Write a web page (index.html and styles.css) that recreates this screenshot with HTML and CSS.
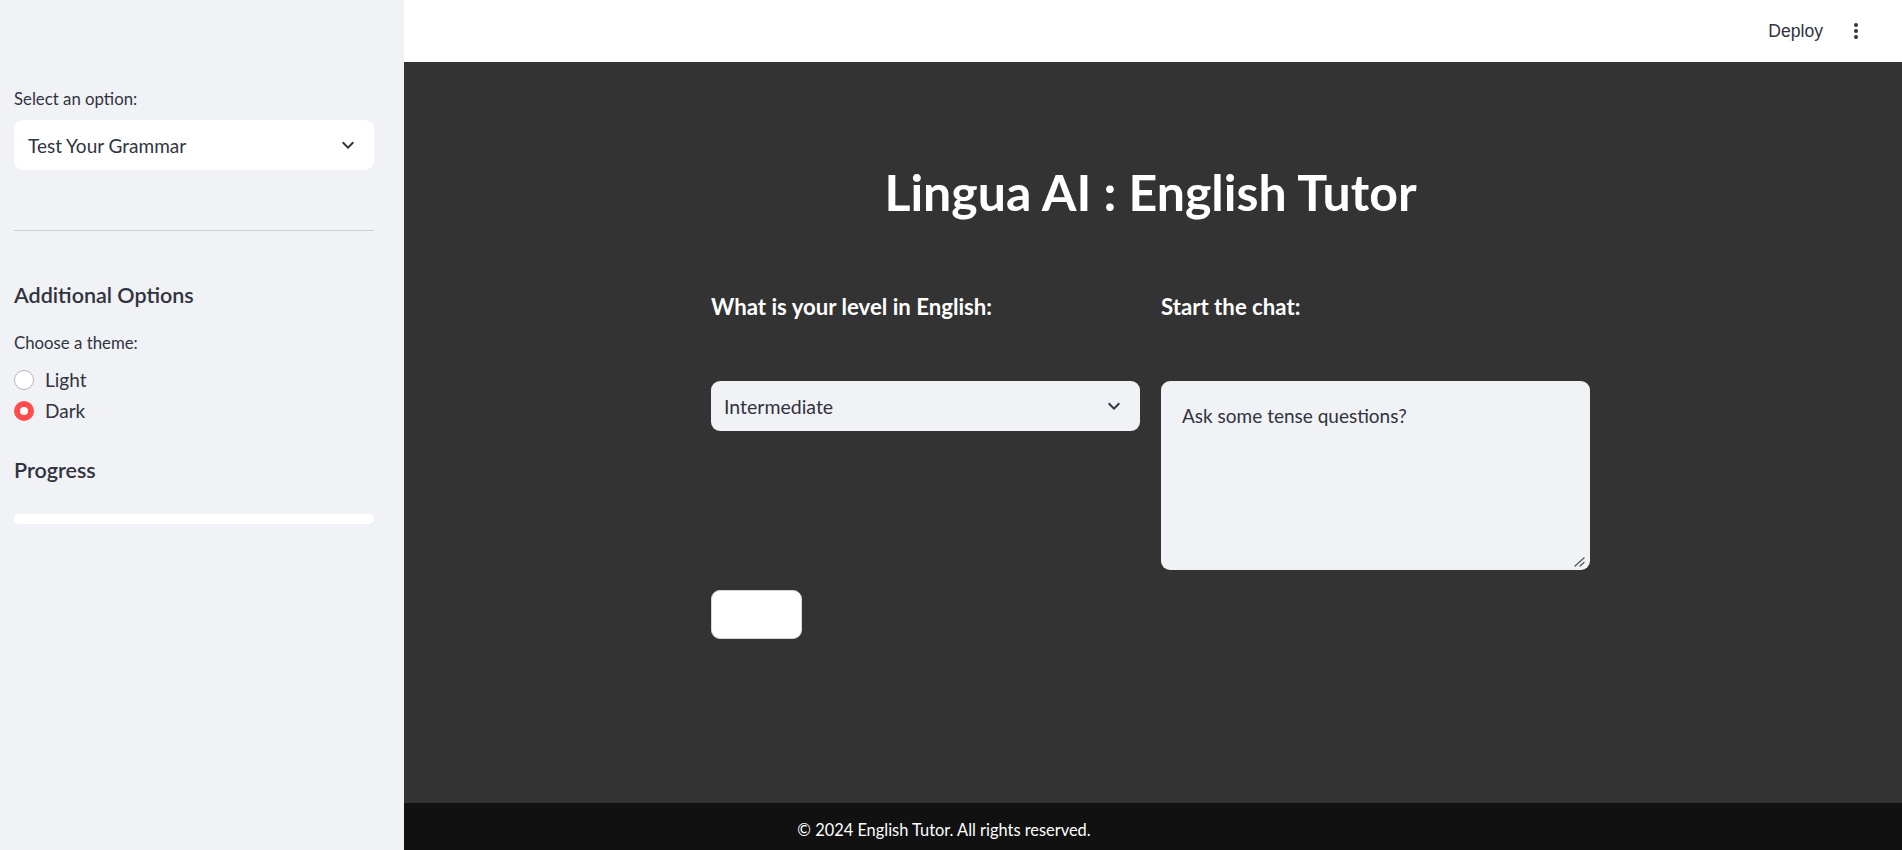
FILE: index.html
```html
<!DOCTYPE html>
<html lang="en">
<head>
<meta charset="utf-8">
<title>Lingua AI : English Tutor</title>
<link rel="stylesheet" href="styles.css">
</head>
<body>
<div class="app">
  <aside class="sidebar">
    <div class="field-label">Select an option:</div>
    <div class="selectbox selectbox-white">
      <span>Test Your Grammar</span>
      <svg class="chev" viewBox="0 0 24 24" width="24" height="24"><path d="M7.41 8.59L12 13.17l4.59-4.58L18 10l-6 6-6-6 1.41-1.41z"/></svg>
    </div>
    <hr class="divider">
    <h3 class="sb-heading">Additional Options</h3>
    <div class="field-label label-theme">Choose a theme:</div>
    <div class="radios">
      <div class="radio"><span class="radio-dot"></span><span>Light</span></div>
      <div class="radio"><span class="radio-dot checked"></span><span>Dark</span></div>
    </div>
    <h3 class="sb-heading heading-progress">Progress</h3>
    <div class="progress"></div>
  </aside>
  <div class="main">
    <header class="topbar">
      <span class="deploy">Deploy</span>
      <svg class="kebab" viewBox="0 0 24 24" width="24" height="24"><circle cx="12" cy="6" r="2"/><circle cx="12" cy="12" r="2"/><circle cx="12" cy="18" r="2"/></svg>
    </header>
    <div class="main-body">
      <section class="content">
        <h1 class="title">Lingua AI : English Tutor</h1>
        <div class="cols">
          <div class="col">
            <h4 class="col-label">What is your level in English:</h4>
            <div class="selectbox selectbox-grey">
              <span>Intermediate</span>
              <svg class="chev" viewBox="0 0 24 24" width="24" height="24"><path d="M7.41 8.59L12 13.17l4.59-4.58L18 10l-6 6-6-6 1.41-1.41z"/></svg>
            </div>
          </div>
          <div class="col">
            <h4 class="col-label">Start the chat:</h4>
            <div class="textarea">
              <span>Ask some tense questions?</span>
              <svg class="resize" viewBox="0 0 12 10" width="12" height="10"><path d="M1 9L10 1M6 9L10 5.5" stroke="#555" stroke-width="1.3" fill="none" stroke-linecap="round"/></svg>
            </div>
          </div>
        </div>
        <button class="btn" type="button"></button>
      </section>
    </div>
  </div>
</div>
<footer class="footer">© 2024 English Tutor. All rights reserved.</footer>
</body>
</html>
```

FILE: styles.css
```css
* { box-sizing: border-box; }
html, body { margin: 0; padding: 0; height: 100%; }
body {
  font-family: Lato, "Noto Sans", sans-serif;
  color: #31333f;
  background: #333333;
  overflow: hidden;
}
.app {
  display: flex;
  height: 850px;
}
.sidebar {
  position: relative;
  z-index: 2;
  width: 404px;
  flex: 0 0 404px;
  background: #f0f2f6;
  padding: 87px 30px 0 14px;
}
.field-label {
  font-size: 16.8px;
  line-height: 24px;
  color: #31333f;
}
.selectbox {
  display: flex;
  align-items: center;
  justify-content: space-between;
  height: 50px;
  border-radius: 9px;
  padding: 0 14px 0 14px;
  font-size: 19px;
  color: #31333f;
}
.selectbox-white {
  background: #ffffff;
  margin-top: 9px;
}
.chev { fill: #31333f; display: block; }
.divider {
  border: 0;
  height: 1px;
  background: #cfd1d7;
  margin: 60px 0 0 0;
}
.sb-heading {
  margin: 49px 0 0 0;
  font-size: 21.5px;
  line-height: 30px;
  font-weight: 600;
  color: #31333f;
}
.label-theme { margin-top: 21px; }
.radios {
  margin-top: 9px;
  display: flex;
  flex-direction: column;
}
.radio {
  display: flex;
  align-items: center;
  height: 31px;
  font-size: 19px;
  gap: 11px;
}
.radio-dot {
  width: 20px;
  height: 20px;
  border-radius: 50%;
  background: #ffffff;
  border: 1px solid #b4b5bb;
  flex: 0 0 20px;
}
.radio-dot.checked {
  border: 6.5px solid #ff4b4b;
}
.heading-progress { margin-top: 29px; }
.progress {
  margin-top: 29px;
  height: 10px;
  border-radius: 5px;
  background: #ffffff;
}
.main {
  flex: 1;
  display: flex;
  flex-direction: column;
  min-width: 0;
}
.topbar {
  height: 62px;
  background: #ffffff;
  display: flex;
  align-items: center;
  justify-content: flex-end;
  padding-right: 34px;
  gap: 21px;
}
.deploy {
  font-family: "Liberation Sans", Arial, sans-serif;
  font-size: 17.6px;
  color: #31333f;
}
.kebab { fill: #31333f; display: block; }
.main-body {
  padding-right: 5px;
}
.content {
  width: 879px;
  margin: 0 auto;
  display: flex;
  flex-direction: column;
  align-items: flex-start;
}
.title {
  align-self: stretch;
  text-align: center;
  margin: 100px 0 0 0;
  font-size: 50px;
  line-height: 60px;
  font-weight: 700;
  color: #ffffff;
}
.cols {
  align-self: stretch;
  display: grid;
  grid-template-columns: 1fr 1fr;
  column-gap: 21px;
  margin-top: 71px;
}
.col-label {
  margin: 0;
  font-size: 22.2px;
  line-height: 28px;
  font-weight: 700;
  color: #ffffff;
}
.selectbox-grey {
  background: #f0f2f6;
  margin-top: 60px;
  padding-left: 13px;
  font-size: 19.5px;
}
.textarea {
  position: relative;
  margin-top: 60px;
  height: 189px;
  background: #f0f2f6;
  border-radius: 9px;
  padding: 20px 21px;
  font-size: 19px;
  line-height: 30px;
  color: #31333f;
}
.resize {
  position: absolute;
  right: 4px;
  bottom: 3px;
}
.btn {
  margin-top: 20px;
  width: 91px;
  height: 49px;
  background: #ffffff;
  border: 1px solid #d6d6d9;
  border-radius: 9px;
  padding: 0;
}
.footer {
  position: fixed;
  left: 0;
  right: 0;
  bottom: 0;
  z-index: 1;
  height: 47px;
  background: #111111;
  color: #ffffff;
  text-align: center;
  font-size: 16.4px;
  line-height: 24px;
  padding: 15px 14px 0 0;
}
```
